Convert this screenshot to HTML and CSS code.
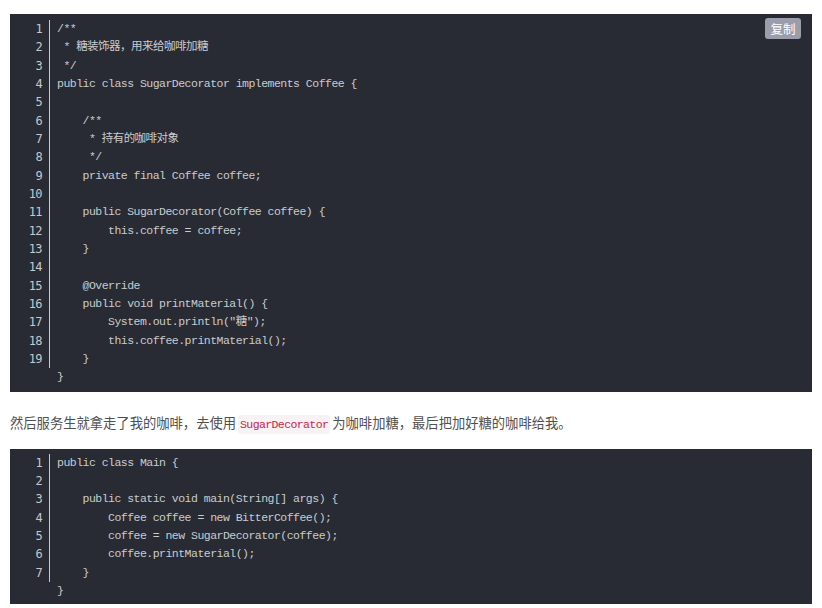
FILE: index.html
```html
<!DOCTYPE html>
<html lang="zh">
<head>
<meta charset="utf-8">
<title>SugarDecorator</title>
<link rel="stylesheet" href="styles.css">
</head>
<body>
<div class="code-block first">
  <ul class="gutter">
    <li>1</li><li>2</li><li>3</li><li>4</li><li>5</li><li>6</li><li>7</li><li>8</li><li>9</li><li>10</li>
    <li>11</li><li>12</li><li>13</li><li>14</li><li>15</li><li>16</li><li>17</li><li>18</li><li>19</li>
  </ul>
<pre class="code">/**
 * 糖装饰器，用来给咖啡加糖
 */
public class SugarDecorator implements Coffee {

    /**
     * 持有的咖啡对象
     */
    private final Coffee coffee;

    public SugarDecorator(Coffee coffee) {
        this.coffee = coffee;
    }

    @Override
    public void printMaterial() {
        System.out.println("糖");
        this.coffee.printMaterial();
    }
}</pre>
  <span class="copy-btn">复制</span>
</div>
<p class="text">然后服务生就拿走了我的咖啡，去使用<code class="inline">SugarDecorator</code>为咖啡加糖，最后把加好糖的咖啡给我。</p>
<div class="code-block second">
  <ul class="gutter">
    <li>1</li><li>2</li><li>3</li><li>4</li><li>5</li><li>6</li><li>7</li>
  </ul>
<pre class="code">public class Main {

    public static void main(String[] args) {
        Coffee coffee = new BitterCoffee();
        coffee = new SugarDecorator(coffee);
        coffee.printMaterial();
    }
}</pre>
</div>
</body>
</html>
```
FILE: styles.css
```css
html, body {
  margin: 0;
  background: #ffffff;
}
body {
  padding: 14px 10px 0 10px;
  font-family: "Noto Sans CJK SC", "Noto Sans", sans-serif;
}
.code-block {
  position: relative;
  display: flex;
  align-items: flex-start;
  background: #282b33;
  padding: 6px 0 5px 0;
}
.code-block.second {
  padding: 5px 0 4px 0;
}
.gutter {
  list-style: none;
  margin: 0;
  padding: 0 7px 0 0;
  width: 32px;
  text-align: right;
  border-right: 1px solid #c9cacd;
  font-family: "DejaVu Sans Mono", "Liberation Mono", monospace;
  font-size: 12px;
  line-height: 18.33px;
  color: #c5c8cc;
  letter-spacing: -0.6px;
}
.gutter li {
  height: 18.33px;
}
.code {
  margin: 0;
  padding: 0 0 0 7px;
  font-family: "Liberation Mono", "Noto Sans CJK SC", monospace;
  font-size: 11.5px;
  letter-spacing: -0.52px;
  line-height: 18.33px;
  color: #c8cbcf;
  white-space: pre;
}
.copy-btn {
  position: absolute;
  top: 4px;
  right: 11px;
  width: 36px;
  height: 21px;
  line-height: 21px;
  text-align: center;
  background: #9b9dac;
  color: #ffffff;
  font-size: 12.5px;
  border-radius: 3px;
}
.text {
  margin: 20px 0 13px 0;
  font-size: 13.3px;
  line-height: 22px;
  color: #505050;
}
.inline {
  font-family: "Liberation Mono", monospace;
  font-size: 11.5px;
  letter-spacing: -0.6px;
  color: #c7254e;
  background: #f9f2f4;
  padding: 3px 2px;
  margin: 0 2px;
  border-radius: 2px;
}
```
